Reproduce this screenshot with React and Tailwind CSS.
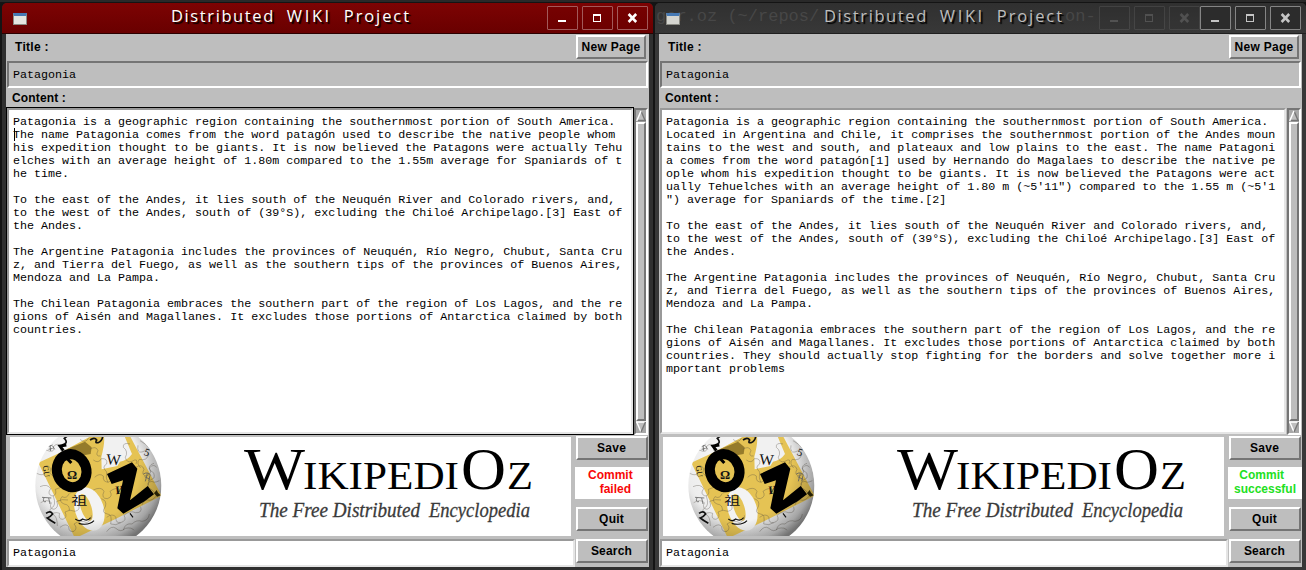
import React from "react";

const LEFT_TEXT = `Patagonia is a geographic region containing the southernmost portion of South America.
The name Patagonia comes from the word patagón used to describe the native people whom
his expedition thought to be giants. It is now believed the Patagons were actually Tehu
elches with an average height of 1.80m compared to the 1.55m average for Spaniards of t
he time.

To the east of the Andes, it lies south of the Neuquén River and Colorado rivers, and,
to the west of the Andes, south of (39°S), excluding the Chiloé Archipelago.[3] East of
the Andes.

The Argentine Patagonia includes the provinces of Neuquén, Río Negro, Chubut, Santa Cru
z, and Tierra del Fuego, as well as the southern tips of the provinces of Buenos Aires,
Mendoza and La Pampa.

The Chilean Patagonia embraces the southern part of the region of Los Lagos, and the re
gions of Aisén and Magallanes. It excludes those portions of Antarctica claimed by both
countries.`;

const RIGHT_TEXT = `Patagonia is a geographic region containing the southernmost portion of South America.
Located in Argentina and Chile, it comprises the southernmost portion of the Andes moun
tains to the west and south, and plateaux and low plains to the east. The name Patagoni
a comes from the word patagón[1] used by Hernando do Magalaes to describe the native pe
ople whom his expedition thought to be giants. It is now believed the Patagons were act
ually Tehuelches with an average height of 1.80 m (~5'11") compared to the 1.55 m (~5'1
") average for Spaniards of the time.[2]

To the east of the Andes, it lies south of the Neuquén River and Colorado rivers, and,
to the west of the Andes, south of (39°S), excluding the Chiloé Archipelago.[3] East of
the Andes.

The Argentine Patagonia includes the provinces of Neuquén, Río Negro, Chubut, Santa Cru
z, and Tierra del Fuego, as well as the southern tips of the provinces of Buenos Aires,
Mendoza and La Pampa.

The Chilean Patagonia embraces the southern part of the region of Los Lagos, and the re
gions of Aisén and Magallanes. It excludes those portions of Antarctica claimed by both
countries. They should actually stop fighting for the borders and solve together more i
mportant problems`;

const mono = "font-['Liberation_Mono',monospace] text-[11.68px] leading-[13px] whitespace-pre text-black";
const bold = "font-['Liberation_Sans',sans-serif] font-bold text-[12px] text-black";

function TitleButton({ kind, active }) {
  const c = active ? "#ffffff" : "#c4c4c4";
  return (
    <div className={`w-[31px] h-[24px] border rounded-[1px] ${active ? "border-[#a25a5a] bg-[#700000]/40" : "border-[#858585] bg-[#2c2c2c]"}`}>
      <svg width="29" height="22" viewBox="0 0 29 22" fill="none" stroke={c}>
        {kind === "min" && <path d="M10 14h8" strokeWidth="2" />}
        {kind === "max" && <path d="M10 8h8M10.5 8v7M17.5 7v8M10 14.5h8" strokeWidth="1" />}
        {kind === "max" && <path d="M10 8h8" strokeWidth="2" />}
        {kind === "close" && <path d="M10.6 7l7.6 8M18.2 7l-7.6 8" strokeWidth="2.6" />}
      </svg>
    </div>
  );
}

function BevelButton({ className, children }) {
  return (
    <button className={`h-[24px] flex items-center justify-center bg-[#bebebe] border-2 border-t-white border-l-white border-b-[#757575] border-r-[#757575] border-solid ${bold} ${className}`}>
      {children}
    </button>
  );
}

function Arrow({ down }) {
  return (
    <svg width="10" height="12" viewBox="0 0 10 12" className="shrink-0">
      <rect width="10" height="12" fill="#a8a8a8" />
      {down ? (
        <g>
          <path d="M0 1h10L5 12z" fill="#bebebe" />
          <path d="M0 1h10" stroke="#fff" strokeWidth="1.6" />
          <path d="M.7 1L5 11" stroke="#fff" strokeWidth="1.4" />
          <path d="M9.5 1L5 11" stroke="#757575" strokeWidth="1.4" />
        </g>
      ) : (
        <g>
          <path d="M0 11h10L5 0z" fill="#bebebe" />
          <path d="M0 10.5h10M9.3 11L5 1" stroke="#757575" strokeWidth="1.4" />
          <path d="M.7 11L5 1" stroke="#fff" strokeWidth="1.5" />
        </g>
      )}
    </svg>
  );
}

function Logo({ id }) {
  return (
    <svg width="561" height="99" viewBox="0 0 561 99" className="block bg-white">
      <defs>
        <radialGradient id={`${id}g`} cx="0.42" cy="0.35" r="0.65">
          <stop offset="0" stopColor="#ffffff" />
          <stop offset="0.65" stopColor="#ededed" />
          <stop offset="0.9" stopColor="#cfcfcf" />
          <stop offset="1" stopColor="#a0a0a0" />
        </radialGradient>
        <radialGradient id={`${id}s`} cx="0.4" cy="0.35" r="0.66">
          <stop offset="0.65" stopColor="#000" stopOpacity="0" />
          <stop offset="1" stopColor="#000" stopOpacity="0.28" />
        </radialGradient>
        <clipPath id={`${id}c`}>
          <circle cx="205" cy="167" r="189" />
        </clipPath>
      </defs>
      <g transform="translate(20 -7) scale(.33333)">
        <circle cx="205" cy="167" r="189" fill={`url(#${id}g)`} />
        <g clipPath={`url(#${id}c)`}>
          <path d="M25 98L95 66L180 20L285 -10L395 197L255 268L135 325z" fill="#e5c354" />
          <path d="M214 80Q225 40 222 20L280 10L306 72Q292 92 270 95L262 108L215 118z" fill="#f1f1f1" />
          <ellipse cx="178" cy="237" rx="43" ry="67" fill="#f3f3f3" transform="rotate(-18 178 237)" />
          <ellipse cx="168" cy="232" rx="16" ry="42" fill="#e5c354" transform="rotate(-18 168 232)" />
          <path d="M110 58L165 35L185 52L182 72L148 78z" fill="#957b2b" />
          <g fill="none" stroke="#504c42" strokeOpacity=".5" strokeWidth="2">
            <path d="M48 60q28 12 22-10q16-16 22 4q-2 18 22 12" />
            <path d="M20 130q20 10 25-3q-12-16 6-20q16 4 8 22q18 12 20 26" />
            <path d="M30 170q22-10 32 6q-12 16 4 22q16-2 10-20q16-10 36-4q18-2 10 16" />
            <path d="M32 218q20-12 32 0q-8 18 8 20q16-6 8-24q18-8 34-4" />
            <path d="M55 262q16-20 34-12q-6 18 10 18q14-6 6-22q14-10 30-2q18-4 10-20" />
            <path d="M90 292q18-14 26-2q0 18 16 14q12-10 0-22q20-14 38-4q18-8 14-22" />
            <path d="M70 198q10 30-6 36q-12 12 6 20q12 6 12 34" />
            <path d="M118 190q-8 18-22 10q-12 14 6 22q18 2 16 20" />
            <path d="M190 90q16 12 24-4q20-2 16 16q-16 8 0 24q-4 20 4 32" />
            <path d="M194 142q14-14 26-4q-2 20 16 18q16-8 4-20" />
            <path d="M190 180q24-12 32 4q-10 22 10 22q18-6 8-22q18-14 30-4" />
            <path d="M214 206q18 6 12 24q-14 18 6 22q16 0 10 30q16 6 30-4" />
            <path d="M300 42q-22-6-20 10q16 12 6 30q4 18 20 12q20-12 12 8" />
            <path d="M324 46q-4 24 12 20q18-10 20 8q-6 20-28 14q-10 12 4 26" />
            <path d="M318 112q18-12 24 6q-10 18 8 20q18-8 8-24q12-14 22-2" />
            <path d="M372 100q-20 6-12 22q16 4 12 22q-22 10-16 22" />
            <path d="M388 152q-16 8-22 2q-18 2-10 20q16 6 24 26" />
            <path d="M230 262q18-14 28 0q-2 18 14 16q20-6 10-22q20-16 34-8q22 2 16-18" />
            <path d="M280 300q6-22 26-18q14-14 30-8q20-2 22-22" />
            <path d="M230 305q14-20 28-10q14 14 28 0q20-4 26 6" />
            <path d="M150 28q16 14 26-4M180 58q18-12 24 4q-10 18 8 16" />
            <path d="M336 225q6-20 24-14q16-4 24-22M330 32q24 12 30 26" />
          </g>
          <g fill="#111" fontFamily="'Liberation Serif','Noto Sans CJK SC',serif" fontSize="34">
            <text x="228" y="103" fontSize="46" transform="rotate(4 228 103)">W</text>
            <text x="111" y="146" fontSize="38" fontWeight="bold">Ω</text>
            <text x="124" y="223" fontSize="44" textLength="48" lengthAdjust="spacingAndGlyphs" fontFamily="'Noto Sans CJK SC',sans-serif" className="[transform-box:fill-box] origin-bottom-left scale-y-75">祖</text>
            <text x="258" y="193" fontSize="35" fontWeight="bold" transform="rotate(-7 258 193)">И</text>
            <text x="340" y="74" fontSize="32" transform="rotate(20 340 74)">5</text>
            <text x="38" y="108" fontSize="24" transform="rotate(82 38 108)">GU</text>
          </g>
          <g fill="none" stroke="#666" strokeWidth="2.5">
            <path d="M54 50l14-5M56 58l12-3M60 45l2 18M68 48l6 10M340 132q14-8 22 4M344 140l16 8M352 130l-6 24M360 136l-4 18M36 202l28 2M42 203q-6 14 6 12M56 204l4 18" />
          </g>
          <g fill="none" stroke="#111" strokeWidth="5">
            <path d="M96 45Q117 40 103 25L120 12M180 30q14-10 20 0q-6 10 4 8q12-4 14-18M48 250q14-10 20 2q-8 10-16 12q10 8 24 16" />
            <path d="M136 267q12 10 22 0q14 8 24-4M146 280q30 8 46-8M300 250l9 12" strokeWidth="3.5" />
          </g>
          <circle cx="205" cy="167" r="189" fill={`url(#${id}s)`} />
        </g>
        <ellipse cx="125" cy="122" rx="44" ry="50" fill="none" stroke="#000" strokeWidth="30" transform="rotate(-18 125 122)" />
        <path d="M100 62L90 48L109 45M112 86l12 13" stroke="#000" strokeWidth="9" fill="none" />
        <path d="M231 132L306 97L322 116L300 211L353 168L372 193L344 214L280 251L262 235L279 151L245 162z" fill="#000" />
        <path d="M372 190l8-10 4 8 8 8-10 4z" fill="#252005" />
      </g>
      <g fontFamily="'Liberation Serif',serif" fill="#000">
        <text x="234" y="52" fontSize="59" textLength="61" lengthAdjust="spacingAndGlyphs">W</text>
        <text x="293" y="52" fontSize="40" textLength="156" lengthAdjust="spacingAndGlyphs">IKIPEDI</text>
        <text x="451" y="52" fontSize="59" textLength="45" lengthAdjust="spacingAndGlyphs">O</text>
        <text x="497" y="52" fontSize="40" textLength="26" lengthAdjust="spacingAndGlyphs">Z</text>
        <text x="249" y="80" fontSize="21" fontStyle="italic" fill="#3a3a3a" stroke="#3a3a3a" strokeWidth=".3" textLength="161" lengthAdjust="spacingAndGlyphs">The Free Distributed</text>
        <text x="419" y="80" fontSize="21" fontStyle="italic" fill="#3a3a3a" stroke="#3a3a3a" strokeWidth=".3" textLength="101" lengthAdjust="spacingAndGlyphs">Encyclopedia</text>
      </g>
    </svg>
  );
}

function TitleBar({ active }) {
  return (
    <header className={`relative h-[31px] shrink-0 rounded-t-[5px] flex items-start border-b overflow-hidden ${active ? "bg-linear-to-b from-[#7d0303] to-[#690000] border-[#2c0000]" : "bg-linear-to-b from-[#303030] to-[#383838] border-[#202020]"}`}>
      {!active && (
        <div aria-hidden="true" className="absolute inset-0 text-[#474747]">
          <span className="absolute left-[1px] top-[1px] font-['Liberation_Mono',monospace] text-[17px] leading-[25px] whitespace-pre">ger.oz (~/repos/</span>
          <span className="absolute left-[410px] top-[1px] font-['Liberation_Mono',monospace] text-[17px] leading-[25px] whitespace-pre">on-</span>
          <div className="absolute left-[444px] top-[3px] flex gap-[4px] opacity-20">
            <TitleButton kind="min" /><TitleButton kind="max" /><TitleButton kind="close" />
          </div>
        </div>
      )}
      <div className={`relative ml-[11px] mt-[10px] w-[14px] h-[12px] border border-t-[3px] border-[#8b8b84] border-t-[#4679b4] ${active ? "bg-[#e5e5e0]" : "bg-[#d5d5d0]"}`} />
      <h1 className={`relative ml-[144px] w-[246px] flex gap-[12px] font-['Open_Sans',sans-serif] text-[16.5px] leading-[26px] whitespace-pre [text-shadow:2px_2px_1px_#000] ${active ? "text-white" : "text-[#bdbdbd]"}`}>
        <span className="tracking-[1.6px]">Distributed</span>
        <span className="tracking-[2.6px]">WIKI</span>
        <span className="tracking-[1.9px]">Project</span>
      </h1>
      <div className="relative ml-auto mr-[5px] mt-[3px] flex gap-[4px]">
        <TitleButton kind="min" active={active} />
        <TitleButton kind="max" active={active} />
        <TitleButton kind="close" active={active} />
      </div>
    </header>
  );
}

function WikiWindow({ id, active, text, status }) {
  return (
    <section className={`w-[651px] h-[567px] shrink-0 flex flex-col rounded-t-[5px] ${active ? "bg-[#303030]" : "bg-[#383838]"}`}>
      <TitleBar active={active} />
      <main className="mx-[4px] w-[643px] h-[533px] bg-[#bebebe] flex flex-col">
        <div className="h-[27px] flex items-start justify-between pl-[9px] pr-[3px] pt-px">
          <span className={`${bold} leading-[24px] tracking-[0.3px]`}>Title :</span>
          <BevelButton className="w-[70px] tracking-[0.3px]">New Page</BevelButton>
        </div>
        <div className={`h-[27px] ml-px mr-px pl-[4px] pt-[6px] border-2 border-t-[#757575] border-l-[#757575] border-b-white border-r-white ${mono}`}>Patagonia</div>
        <div className={`h-[19px] pl-[6px] leading-[20px] tracking-[0.15px] ${bold}`}>Content :</div>
        <div className="h-[328px] flex">
          <div className={`w-[628px] border ${active ? "border-black" : "border-[#bebebe]"}`}>
            <div className={`relative h-full border-2 border-t-[#999] border-l-[#999] border-b-[#e5e5e5] border-r-[#e5e5e5] bg-white pl-[4px] pt-[6px] ${mono}`}>
              {text}
              {active && <i className="absolute left-[5px] top-[18px] w-px h-[13px] bg-black" />}
            </div>
          </div>
          <div className="w-[14px] mt-px border-2 border-t-[#757575] border-l-[#757575] border-b-white border-r-white bg-[#a8a8a8] flex flex-col">
            <Arrow />
            <div className="flex-1 bg-[#bebebe] border-2 border-t-white border-l-white border-r-[#757575] border-b-[#757575]" />
            <Arrow down />
          </div>
        </div>
        <div className="flex-1 flex">
          <div className="w-[569px] flex flex-col">
            <div className="pl-[4px] pt-[2px]"><Logo id={id} /></div>
            <div className={`mt-[3px] ml-px h-[28px] border-2 border-t-[#999] border-l-[#999] border-b-[#e5e5e5] border-r-[#e5e5e5] bg-white pl-[4px] pt-[6px] ${mono}`}>Patagonia</div>
          </div>
          <div className="flex-1 pt-px flex flex-col">
            <BevelButton className="ml-px w-[72px] pr-px tracking-[0.3px]">Save</BevelButton>
            <div className={`mt-[7px] h-[32px] bg-white text-center whitespace-pre font-['Liberation_Sans',sans-serif] font-bold text-[12px] leading-[14px] pt-[1px] ${active ? "text-[#f80808]" : "text-[#22e022]"}`}>
              {status}
            </div>
            <BevelButton className="mt-[8px] ml-px w-[72px] pr-px tracking-[0.2px]">Quit</BevelButton>
            <BevelButton className="mt-[8px] ml-px w-[72px] pr-px tracking-[0.2px]">Search</BevelButton>
          </div>
        </div>
      </main>
    </section>
  );
}

export default function App() {
  return (
    <div className="w-[1306px] h-[570px] overflow-hidden bg-[#141414] border-t-2 border-[#292929] pt-px pl-[2px] flex gap-[2px]">
      <WikiWindow id="a" active text={LEFT_TEXT} status={"Commit \n  failed"} />
      <WikiWindow id="b" text={RIGHT_TEXT} status={"Commit  \nsuccessful"} />
    </div>
  );
}
